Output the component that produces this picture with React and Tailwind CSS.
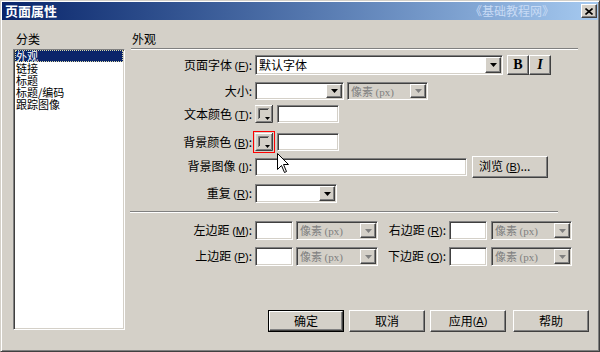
import React from 'react';

const sunken =
  'border border-t-[#808080] border-l-[#808080] border-b-white border-r-white shadow-[inset_1px_1px_0_#404040,inset_-1px_-1px_0_#d4d0c8]';
const raised =
  'border border-t-white border-l-white border-b-[#404040] border-r-[#404040] shadow-[inset_-1px_-1px_0_#808080]';

const Arrow = ({ grey }) => (
  <svg width="7" height="4" viewBox="0 0 7 4" className="block">
    <path d="M0 0h7L3.5 4z" fill={grey ? '#808080' : '#000'} />
  </svg>
);

// access key, e.g. (F)
const Key = ({ k }) => (
  <span className="font-['Liberation_Sans',sans-serif] text-[11px]">
    (<u>{k}</u>)
  </span>
);

const Select = ({ className, text, disabled }) => (
  <div className={`${sunken} ${className} flex p-[1px] ${disabled ? 'bg-[#d4d0c8]' : 'bg-white'}`}>
    <div
      className={`flex-1 min-w-0 flex items-center pl-[2px] leading-[14px] whitespace-nowrap ${
        disabled ? 'text-[#808080]' : 'text-black'
      }`}
    >
      {text}
    </div>
    <div className={`${raised} w-[16px] shrink-0 flex items-center justify-center bg-[#d4d0c8]`}>
      <Arrow grey={disabled} />
    </div>
  </div>
);

const Px = () => (
  <span className="text-[11px]">
    像素 <span className="font-['Liberation_Serif',serif] text-[11px]">(px)</span>
  </span>
);

const TextBox = ({ className }) => <div className={`${sunken} ${className} bg-white`} />;

const ColorButton = () => (
  <svg width="18" height="18" viewBox="0 0 18 18" className="block">
    <rect x="0" y="0" width="18" height="18" fill="#d4d0c8" />
    <path d="M0 17.5V0.5H17.5" stroke="#fff" fill="none" />
    <path d="M0.5 17.5H17.5V0" stroke="#404040" fill="none" />
    <path d="M1.5 16.5H16.5V1" stroke="#808080" fill="none" />
    <path d="M3.5 14V3.5H14" stroke="#808080" fill="none" />
    <path d="M4.5 13V4.5H13" stroke="#404040" fill="none" />
    <path d="M10 12h5l-2.5 3z" fill="#000" />
  </svg>
);

const Label = ({ children, className = 'w-[121px]' }) => (
  <div className={`${className} text-right whitespace-nowrap leading-[14px]`}>{children}</div>
);

const Button = ({ children, isDefault, className = '' }) => (
  <div className={`${isDefault ? 'border border-black' : ''} ${className}`}>
    <div
      className={`${raised} ${isDefault ? 'w-[74px] h-[20px]' : 'w-[76px] h-[22px]'} flex items-center justify-center leading-[14px]`}
    >
      {children}
    </div>
  </div>
);

const Cursor = () => (
  <svg width="13" height="21" viewBox="0 0 13 21" className="absolute left-[276px] top-[152px]">
    <path d="M0.5 0.5V16.5L4.5 12.5L7.5 19.5L9.5 18.5L6.5 11.5H11.5Z" fill="#fff" stroke="#000" />
  </svg>
);

const items = ['外观', '链接', '标题', '标题/编码', '跟踪图像'];

export default function App() {
  return (
    <div className="relative w-[600px] h-[352px] bg-[#d4d0c8] flex flex-col text-[12px] text-black font-['Noto_Sans_CJK_SC','Liberation_Sans',sans-serif] border border-t-[#d4d0c8] border-l-[#d4d0c8] border-b-[#404040] border-r-[#404040] shadow-[inset_1px_1px_0_#fff,inset_-1px_-1px_0_#808080] overflow-hidden">
      {/* title bar */}
      <div className="mx-[1px] mt-[1px] h-[18px] flex items-center pl-[3px] bg-gradient-to-r from-[#0a246a] to-[#a6caf0]">
        <span className="text-white font-bold text-[13px] leading-[14px]">页面属性</span>
        <span className="ml-auto text-[#c8dbf5] leading-[14px]">《基础教程网》</span>
        <div
          className={`${raised} ml-[27px] mr-[1px] w-[16px] h-[14px] bg-[#d4d0c8] flex items-center justify-center`}
        >
          <svg width="8" height="7" viewBox="0 0 8 7">
            <path d="M0.5 0.5L7.5 6.5M7.5 0.5L0.5 6.5" stroke="#000" strokeWidth="1.6" />
          </svg>
        </div>
      </div>

      <div className="flex flex-1 mb-[1px] mr-[1px]">
        {/* category list */}
        <div className="pl-[12px] pt-[12px] flex flex-col">
          <div className="ml-[3px] leading-[14px]">分类</div>
          <div className={`${sunken} mt-[3px] w-[112px] h-[281px] bg-white px-[1px]`}>
            {items.map((it, i) => (
              <div
                key={it}
                className={`h-[12px] text-[11px] leading-[12px] pl-[1px] whitespace-nowrap ${
                  i === 0 ? 'bg-[#0a246a] text-white outline-1 outline-dotted outline-[#d8d8a8] -outline-offset-1' : ''
                }`}
              >
                {it}
              </div>
            ))}
          </div>
        </div>

        {/* form */}
        <div className="ml-[6px] flex-1 flex flex-col pt-[12px]">
          <div className="pl-[1px] leading-[14px]">外观</div>
          <div className="mt-[2px] w-[447px] border-t border-t-[#808080] border-b border-b-white" />

          <div className="flex items-center mt-[5px] h-[20px]">
            <Label>
              页面字体 <Key k="F" />:
            </Label>
            <Select className="ml-[3px] w-[248px] h-[20px]" text="默认字体" />
            <div className={`${raised} ml-[4px] w-[22px] h-[20px] flex items-center justify-center font-['Liberation_Serif',serif] font-bold text-[14px] leading-none`}>
              B
            </div>
            <div className={`${raised} w-[22px] h-[20px] flex items-center justify-center font-['Liberation_Serif',serif] font-bold italic text-[14px] leading-none`}>
              I
            </div>
          </div>

          <div className="flex items-center mt-[7px] h-[18px]">
            <Label>大小:</Label>
            <Select className="ml-[3px] w-[89px] h-[18px]" text="" />
            <Select className="ml-[3px] w-[81px] h-[18px]" text={<Px />} disabled />
          </div>

          <div className="flex items-center mt-[5px] h-[18px]">
            <Label>
              文本颜色 <Key k="T" />:
            </Label>
            <div className="ml-[3px]">
              <ColorButton />
            </div>
            <TextBox className="ml-[4px] w-[62px] h-[18px]" />
          </div>

          <div className="flex items-center mt-[8px] h-[22px]">
            <Label>
              背景颜色 <Key k="B" />:
            </Label>
            <div className="ml-[1px] border border-[#ff0000] p-[1px]">
              <ColorButton />
            </div>
            <TextBox className="ml-[2px] w-[62px] h-[18px]" />
          </div>

          <div className="flex items-center mt-[3px] h-[21px]">
            <Label>
              背景图像 <Key k="I" />:
            </Label>
            <TextBox className="ml-[3px] w-[212px] h-[18px]" />
            <Button className="ml-[5px]">
              <span className="w-full pl-[6px] whitespace-nowrap text-left">
                浏览 <Key k="B" />...
              </span>
            </Button>
          </div>

          <div className="flex items-center mt-[7px] h-[19px]">
            <Label>
              重复 <Key k="R" />:
            </Label>
            <Select className="ml-[3px] w-[82px] h-[19px]" text="" />
          </div>

          <div className="mt-[8px] -ml-[1px] w-[428px] border-t border-t-[#808080] border-b border-b-white" />

          <div className="flex items-center mt-[8px] h-[19px]">
            <Label>
              左边距 <Key k="M" />:
            </Label>
            <TextBox className="ml-[3px] w-[38px] h-[19px]" />
            <Select className="ml-[3px] w-[82px] h-[19px]" text={<Px />} disabled />
            <Label className="ml-[8px] w-[60px]">
              右边距 <Key k="R" />:
            </Label>
            <TextBox className="ml-[3px] w-[38px] h-[19px]" />
            <Select className="ml-[4px] w-[81px] h-[19px]" text={<Px />} disabled />
          </div>

          <div className="flex items-center mt-[7px] h-[19px]">
            <Label>
              上边距 <Key k="P" />:
            </Label>
            <TextBox className="ml-[3px] w-[38px] h-[19px]" />
            <Select className="ml-[3px] w-[82px] h-[19px]" text={<Px />} disabled />
            <Label className="ml-[8px] w-[60px]">
              下边距 <Key k="O" />:
            </Label>
            <TextBox className="ml-[3px] w-[38px] h-[19px]" />
            <Select className="ml-[4px] w-[81px] h-[19px]" text={<Px />} disabled />
          </div>

          <div className="mt-auto mb-[18px] pr-[9px] flex justify-end">
            <Button isDefault>确定</Button>
            <Button className="ml-[5px]">取消</Button>
            <Button className="ml-[5px]">
              应用 <Key k="A" />
            </Button>
            <Button className="ml-[7px]">帮助</Button>
          </div>
        </div>
      </div>

      <Cursor />
    </div>
  );
}
